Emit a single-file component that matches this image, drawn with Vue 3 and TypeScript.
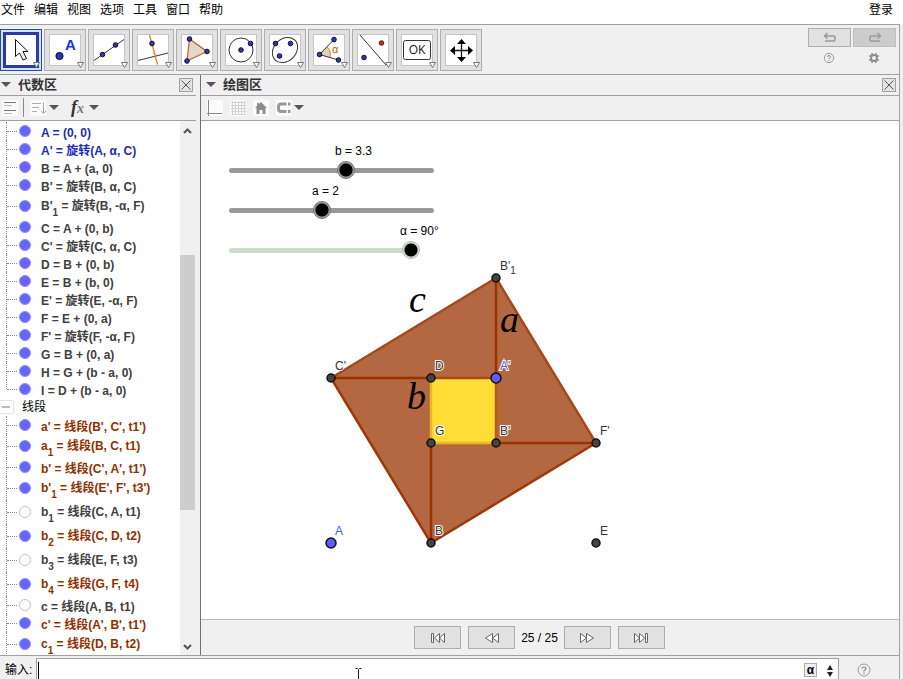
<script setup lang="ts">
import { computed, ref } from 'vue'

interface Row {
  name: string
  sub?: string
  def: string
  tone: 'blue' | 'dark' | 'brown'
  shown: boolean
}

type Pt = [number, number]

const menus: string[] = ['文件', '编辑', '视图', '选项', '工具', '窗口', '帮助']
const tools: string[] = ['移动', '描点', '直线', '垂线', '多边形', '圆', '椭圆', '角度', '轴对称', '按钮', '移动视图']

const row = (name: string, sub: string, def: string, tone: Row['tone'] = 'dark', shown = true): Row => ({ name, sub, def, tone, shown })

const points: Row[] = [
  row('A', '', '(0, 0)', 'blue'),
  row("A'", '', '旋转(A, α, C)', 'blue'),
  row('B', '', 'A + (a, 0)'),
  row("B'", '', '旋转(B, α, C)'),
  row("B'", '1', '旋转(B, -α, F)'),
  row('C', '', 'A + (0, b)'),
  row("C'", '', '旋转(C, α, C)'),
  row('D', '', 'B + (0, b)'),
  row('E', '', 'B + (b, 0)'),
  row("E'", '', '旋转(E, -α, F)'),
  row('F', '', 'E + (0, a)'),
  row("F'", '', '旋转(F, -α, F)'),
  row('G', '', 'B + (0, a)'),
  row('H', '', 'G + (b - a, 0)'),
  row('I', '', 'D + (b - a, 0)'),
]

const segments: Row[] = [
  row("a'", '', "线段(B', C', t1')", 'brown'),
  row('a', '1', '线段(B, C, t1)', 'brown'),
  row("b'", '', "线段(C', A', t1')", 'brown'),
  row("b'", '1', "线段(E', F', t3')", 'brown'),
  row('b', '1', '线段(C, A, t1)', 'dark', false),
  row('b', '2', '线段(C, D, t2)', 'brown'),
  row('b', '3', '线段(E, F, t3)', 'dark', false),
  row('b', '4', '线段(G, F, t4)', 'brown'),
  row('c', '', '线段(A, B, t1)', 'dark', false),
  row("c'", '', "线段(A', B', t1')", 'brown'),
  row('c', '1', '线段(D, B, t2)', 'brown'),
]

const a = ref(2)
const b = ref(3.3)
const alpha = ref(90)
const command = ref('')

// World coordinates to canvas pixels: 50 pixels per unit.
const at = (x: number, y: number): Pt => [130 + x * 50, 422 - y * 50]

const P = computed(() => {
  const u = Number(a.value)
  const v = Number(b.value)
  return {
    A: at(0, 0), B: at(u, 0), C1: at(0, v), D: at(u, v), G: at(u, u),
    A1: at(v, v), B1: at(v, u), T: at(v, u + v), F1: at(u + v, u), E: at(u + v, 0),
  }
})

const poly = (...pts: Pt[]): string => pts.map((p) => p.join(',')).join(' ')

const edges = computed(() => {
  const p = P.value
  return [
    { pts: [p.C1, p.T], color: '#a5491c' },
    { pts: [p.T, p.F1], color: '#a5491c' },
    { pts: [p.D, p.A1], color: '#ad4b0c' },
    { pts: [p.A1, p.B1], color: '#b85a10' },
    { pts: [p.D, p.G], color: '#edb71f' },
    { pts: [p.G, p.B1], color: '#edb71f' },
    { pts: [p.F1, p.B], color: '#9c380a' },
    { pts: [p.C1, p.B], color: '#9c380a' },
    { pts: [p.C1, p.D], color: '#993300' },
    { pts: [p.A1, p.T], color: '#993300' },
    { pts: [p.B1, p.F1], color: '#993300' },
    { pts: [p.G, p.B], color: '#993300' },
  ]
})

const dots = computed(() => {
  const p = P.value
  return [
    { at: p.T, label: "B'", sub: '1', free: false },
    { at: p.C1, label: "C'", sub: '', free: false },
    { at: p.D, label: 'D', sub: '', free: false },
    { at: p.A1, label: "A'", sub: '', free: true },
    { at: p.G, label: 'G', sub: '', free: false },
    { at: p.B1, label: "B'", sub: '', free: false },
    { at: p.F1, label: "F'", sub: '', free: false },
    { at: p.B, label: 'B', sub: '', free: false },
    { at: p.A, label: 'A', sub: '', free: true },
    { at: p.E, label: 'E', sub: '', free: false },
  ]
})
</script>

<template>
  <div class="app">
    <nav class="menu">
      <button v-for="m in menus" :key="m" type="button">{{ m }}</button>
      <button type="button" class="login">登录</button>
    </nav>

    <div class="body">
      <div class="toolbar">
        <button v-for="(t, i) in tools" :key="t" type="button" class="tool" :class="{ active: i === 0 }" :aria-label="t">
          <svg width="42" height="42" viewBox="0 0 42 42">
            <g v-if="i === 0">
              <path d="M15.5 10.5V27.5L19.5 24L23 31L26.5 29.5L23 22.5H28Z" fill="#fff" stroke="#111" />
            </g>
            <g v-else-if="i === 1">
              <circle cx="15.5" cy="27" r="3.6" class="dot" />
              <text x="21" y="21" class="glyph-a">A</text>
            </g>
            <g v-else-if="i === 2">
              <path d="M6 31.5L36 10.5" class="ln" />
              <circle cx="14.5" cy="25.5" r="2.3" class="dot" />
              <circle cx="27.5" cy="16" r="2.3" class="dot" />
            </g>
            <g v-else-if="i === 3">
              <path d="M6 31.5L36 24" class="ln" />
              <path d="M17.5 6L25.5 35.5" stroke="#d9822b" stroke-width="1.3" />
              <circle cx="20" cy="14.5" r="2.3" class="dot" />
            </g>
            <g v-else-if="i === 4">
              <path d="M13.5 10L31 22.5L11 32Z" fill="#e0d6ca" stroke="#b5622f" stroke-width="1.2" />
              <circle cx="13.5" cy="10" r="2.3" class="dot" />
              <circle cx="31" cy="22.5" r="2.3" class="dot" />
              <circle cx="11" cy="32" r="2.3" class="dot" />
            </g>
            <g v-else-if="i === 5">
              <circle cx="21" cy="21" r="12" fill="none" class="ln" />
              <circle cx="21" cy="21" r="2.3" class="dot" />
              <circle cx="30.5" cy="14.5" r="2.3" class="dot" />
            </g>
            <g v-else-if="i === 6">
              <ellipse cx="21" cy="21" rx="14" ry="11" transform="rotate(-45 21 21)" fill="none" class="ln" />
              <circle cx="11.5" cy="14.5" r="2.3" class="dot" />
              <circle cx="26.5" cy="14.5" r="2.3" class="dot" />
              <circle cx="15.5" cy="27" r="2.3" class="dot" />
            </g>
            <g v-else-if="i === 7">
              <path d="M11.5 25.5L19 18A11 11 0 0 1 22 28.5Z" fill="#e0d0c0" />
              <path d="M19 18A11 11 0 0 1 22 28.5" fill="none" stroke="#d9822b" />
              <path d="M26 10.5L11.5 25.5L30.5 31" fill="none" class="ln" />
              <circle cx="26" cy="10.5" r="2.3" class="dot" />
              <circle cx="11.5" cy="25.5" r="2.3" class="dot" />
              <circle cx="30.5" cy="31" r="2.3" class="dot" />
              <text x="24" y="24" class="glyph-alpha">α</text>
            </g>
            <g v-else-if="i === 8">
              <path d="M8 6L34 36" class="ln" />
              <circle cx="12" cy="28.5" r="2.3" class="dot" />
              <circle cx="29.5" cy="14" r="2.3" fill="#b03a10" stroke="#5a1c05" />
            </g>
            <g v-else-if="i === 9">
              <rect x="7.5" y="11.5" width="27" height="19" rx="2" fill="#fff" stroke="#333" />
              <text x="21" y="25" text-anchor="middle" class="glyph-ok">OK</text>
            </g>
            <g v-else>
              <path d="M21.5 13V30M13 21.5H30" stroke="#111" stroke-width="1.3" />
              <path d="M21.5 10L26 15H17ZM21.5 33L26 28H17ZM10 21.5L15 17V26ZM33 21.5L28 17V26Z" fill="#000" />
            </g>
            <path d="M33.5 33.5H39.5L36.5 38.5Z" fill="#fff" stroke="#777" />
          </svg>
        </button>
        <div class="history">
          <button type="button" class="hist" aria-label="撤销">
            <svg width="18" height="12" viewBox="0 0 18 12"><path d="M4 4H12.5Q14 4 14 5.5V7.5Q14 9 12.500 9H4" /><path d="M6.500 1L3.500 4L6.500 6.500" /></svg>
          </button>
          <button type="button" class="hist off" aria-label="重做">
            <svg width="18" height="12" viewBox="0 0 18 12"><path d="M14 4H5.500Q4 4 4 5.500V7.500Q4 9 5.500 9H14" /><path d="M11.500 1L14.500 4L11.500 6.500" /></svg>
          </button>
          <button type="button" class="plain" aria-label="帮助">
            <svg width="12" height="12" viewBox="0 0 12 12"><circle cx="6" cy="6" r="4.7" fill="none" stroke="#999" /><path d="M4.500 5Q4.500 3.500 6 3.500Q7.500 3.500 7.500 4.800Q7.500 5.500 6 6.500V7.200M6 8V9" fill="none" stroke="#888" /></svg>
          </button>
          <button type="button" class="plain" aria-label="设置">
            <svg width="12" height="12" viewBox="0 0 12 12"><circle cx="6" cy="6" r="3" fill="none" stroke="#8c8c8c" stroke-width="1.800" /><path d="M4 1V3M8 1V3M4 9V11M8 9V11M1 4H3M1 8H3M9 4H11M9 8H11" stroke="#8c8c8c" stroke-width="1.500" /></svg>
          </button>
        </div>
      </div>

      <div class="panels">
        <section class="algebra">
          <header class="head">
            <i class="tri"></i><h2>代数区</h2>
            <button type="button" class="close" aria-label="关闭"><svg width="14" height="14" viewBox="0 0 14 14"><path d="M2.500 2.500L11.500 11.500M11.500 2.500L2.500 11.500" /></svg></button>
          </header>
          <div class="style-bar">
            <svg width="21" height="16" viewBox="0 0 21 16"><path d="M0 0H16V16H0Z" fill="#fafafa" /><path d="M2 2.500H14M2 10.500H14" stroke="#777" /><path d="M2 5.500H10M2 13.500H10" stroke="#bbb" /></svg>
            <i class="sep"></i>
            <svg class="sort" width="16" height="16" viewBox="0 0 16 16"><path d="M0 0H16V16H0Z" fill="#fafafa" /><path d="M2 3.500H11M2 7.500H9M2 11.500H7M13.500 2V13M11 11L13.500 13.500L16 11" fill="none" stroke="#aaa" /></svg>
            <i class="tri"></i>
            <span class="fx">f<small>x</small></span>
            <i class="tri"></i>
          </div>
          <div class="list">
            <div class="tree">
              <ul>
                <li v-for="(r, i) in points" :key="i" :class="[r.tone, { tall: r.sub, last: i === points.length - 1 }]">
                  <i class="mark" :class="{ hidden: !r.shown }"></i>
                  <span>{{ r.name }}<sub v-if="r.sub">{{ r.sub }}</sub> = {{ r.def }}</span>
                </li>
              </ul>
              <div class="group"><button type="button" aria-label="折叠"></button><span>线段</span></div>
              <ul>
                <li v-for="(r, i) in segments" :key="i" :class="[r.tone, { tall: r.sub }]">
                  <i class="mark" :class="{ hidden: !r.shown }"></i>
                  <span>{{ r.name }}<sub v-if="r.sub">{{ r.sub }}</sub> = {{ r.def }}</span>
                </li>
              </ul>
            </div>
            <div class="scroll">
              <svg width="15" height="18" viewBox="0 0 15 18"><path d="M4 12L7.500 8.500L11 12" /></svg>
              <i class="before"></i>
              <i class="thumb"></i>
              <i class="after"></i>
              <svg width="15" height="18" viewBox="0 0 15 18"><path d="M4 8L7.500 11.500L11 8" /></svg>
            </div>
          </div>
        </section>

        <section class="graphics">
          <header class="head">
            <i class="tri"></i><h2>绘图区</h2>
            <button type="button" class="close" aria-label="关闭"><svg width="14" height="14" viewBox="0 0 14 14"><path d="M2.500 2.500L11.500 11.500M11.500 2.500L2.500 11.500" /></svg></button>
          </header>
          <div class="style-bar views">
            <svg width="16" height="16" viewBox="0 0 16 16"><path d="M0 0H16V16H0Z" fill="#fcfcfc" /><path d="M1.500 0V16M0 13.500H15" stroke="#888" /></svg>
            <svg width="16" height="16" viewBox="0 0 16 16"><path d="M0 0H16V16H0Z" fill="#fcfcfc" /><path d="M2.500 1V15M5.500 1V15M8.500 1V15M11.500 1V15M14.500 1V15M1 2.500H16M1 5.500H16M1 8.500H16M1 11.500H16M1 14.500H16" stroke="#d2d2d2" /></svg>
            <svg width="16" height="16" viewBox="0 0 16 16"><path d="M0 0H16V16H0Z" fill="#fcfcfc" /><path d="M8 2L14 8H12.500V14H9.500V10H6.500V14H3.500V8H2L4 6V3H6V4Z" fill="#8c8c8c" /></svg>
            <svg width="16" height="16" viewBox="0 0 16 16"><path d="M0 0H16V16H0Z" fill="#fcfcfc" /><path d="M10.500 4H5Q2.500 4 2.500 6.500V9Q2.500 11.500 5 11.500H10.500" fill="none" stroke="#999" stroke-width="3" /><path d="M12 4H14.500M12 11.500H14.500" stroke="#999" stroke-width="3" /></svg>
            <i class="tri"></i>
          </div>
          <div class="canvas">
            <svg class="drawing" width="100%" height="100%">
              <polygon :points="poly(P.C1, P.T, P.F1, P.B)" fill="#b36841" />
              <polygon :points="poly(P.D, P.A1, P.B1, P.G)" fill="#ffdc36" />
              <line v-for="(e, i) in edges" :key="i" :x1="e.pts[0][0]" :y1="e.pts[0][1]" :x2="e.pts[1][0]" :y2="e.pts[1][1]" :stroke="e.color" stroke-width="2.500" />
              <g class="math">
                <text x="208" y="191">c</text>
                <text x="299" y="211">a</text>
                <text x="206" y="288">b</text>
              </g>
              <g v-for="(d, i) in dots" :key="i" :class="{ free: d.free }">
                <circle :cx="d.at[0]" :cy="d.at[1]" :r="d.free ? 5 : 4" class="pt" />
                <text :x="d.at[0] + 4" :y="d.at[1] - 8" class="tag">{{ d.label }}<tspan v-if="d.sub" dy="4" font-size="10">{{ d.sub }}</tspan></text>
              </g>
            </svg>
            <div class="slider sb">
              <label for="sl-b">b = {{ b }}</label>
              <input id="sl-b" v-model.number="b" type="range" min="-3" max="8" step="0.1" />
            </div>
            <div class="slider sa">
              <label for="sl-a">a = {{ a }}</label>
              <input id="sl-a" v-model.number="a" type="range" min="-3" max="8" step="0.1" />
            </div>
            <div class="slider sg">
              <label for="sl-g">α = {{ alpha }}°</label>
              <input id="sl-g" v-model.number="alpha" type="range" min="0" max="90" />
            </div>
          </div>
          <div class="player">
            <button type="button" aria-label="第一步"><svg width="16" height="12" viewBox="0 0 16 12"><path d="M1.500 1.500H3.500V10.500H1.500ZM9.500 1.500V10.500L4.500 6ZM14.500 1.500V10.500L9.500 6Z" /></svg></button>
            <button type="button" aria-label="上一步"><svg width="16" height="12" viewBox="0 0 16 12"><path d="M8.500 1.500V10.500L1.500 6ZM14.500 1.500V10.500L8.500 6Z" /></svg></button>
            <span>25 / 25</span>
            <button type="button" aria-label="下一步"><svg width="16" height="12" viewBox="0 0 16 12"><path d="M1.500 1.500V10.500L7.500 6ZM7.500 1.500V10.500L14.500 6Z" /></svg></button>
            <button type="button" aria-label="最后一步"><svg width="16" height="12" viewBox="0 0 16 12"><path d="M1.500 1.500V10.500L6.500 6ZM6.500 1.500V10.500L11.500 6ZM12.500 1.500H14.500V10.500H12.500Z" /></svg></button>
          </div>
        </section>
      </div>

      <div class="entry">
        <label for="cmd">输入:</label>
        <div class="box">
          <i class="caret"></i>
          <input id="cmd" v-model="command" type="text" />
          <button type="button" class="sym">α</button>
          <svg width="8" height="14" viewBox="0 0 8 14"><path d="M4 1L7 6H1ZM4 13L7 8H1Z" fill="#222" /></svg>
          <svg class="ibeam" width="7" height="14" viewBox="0 0 7 14"><path d="M.5 1.500H2.500L3.500 2.500L4.500 1.500H6.500M3.500 2.500V14" fill="none" stroke="#222" /></svg>
        </div>
        <button type="button" class="ask" aria-label="输入帮助">
          <svg width="14" height="14" viewBox="0 0 14 14"><circle cx="7" cy="7" r="6" fill="none" stroke="#999" /><path d="M5 5.500Q5 4 7 4Q9 4 9 5.500Q9 6.500 7 7.500V8.500M7 9.500V11" fill="none" stroke="#888" stroke-width="1.200" /></svg>
        </button>
      </div>
    </div>
  </div>
</template>

<style>
body {
  background: #fff;
  overflow: hidden;
}
</style>

<style scoped>
.app {
  height: 100vh;
  display: flex;
  flex-direction: column;
  overflow: hidden;
  background: #f0f0f0;
  color: #000;
  font: 12px/18px "Liberation Sans", "Noto Sans CJK SC", sans-serif;
}
.app * {
  box-sizing: border-box;
}
button {
  margin: 0;
  padding: 0;
  border: 0;
  background: none;
  color: inherit;
  font: inherit;
}
svg {
  display: block;
  flex: none;
}
.menu {
  display: flex;
  gap: 9px;
  height: 24px;
  padding: 0 10px 4px 1px;
  align-items: center;
  background: #fff;
}
.login {
  margin-left: auto;
}
.body {
  flex: 1;
  min-height: 0;
  display: flex;
  flex-direction: column;
  margin-right: 3px;
  border-top: 1px solid #a0a0a0;
  border-right: 1px solid #a0a0a0;
}
.toolbar {
  display: flex;
  gap: 2px;
  height: 50px;
  padding: 4px 3px 0 0;
  border-bottom: 1px solid #a0a0a0;
}
.tool {
  width: 42px;
  height: 42px;
  flex: none;
  border: 1px solid #adadad;
  background: linear-gradient(#fff, #fff) center / 30px 30px no-repeat, linear-gradient(#c4c4c4, #c4c4c4) center / 32px 32px no-repeat, #e1e1e1;
}
.tool svg {
  margin: -1px;
}
.tool.active {
  border-color: #2a4a9e;
  background: linear-gradient(#fff, #fff) center / 30px 30px no-repeat, linear-gradient(#2d3aa6, #2d3aa6) center / 36px 36px no-repeat, #cfe4f7;
}
.dot {
  fill: #2a35c8;
  stroke: #111;
}
.ln {
  stroke: #333;
}
.glyph-a {
  font: bold 15px "Liberation Sans", sans-serif;
  fill: #2335d0;
}
.glyph-alpha {
  font: 11px "Liberation Sans", sans-serif;
  fill: #c8600a;
}
.glyph-ok {
  font: 500 12px "Open Sans", sans-serif;
  fill: #111;
}
.history {
  margin-left: auto;
  display: grid;
  grid-template-columns: 43px 43px;
  grid-template-rows: 19px 20px;
  gap: 1px 2px;
  margin-top: -1px;
}
.hist,
.plain {
  display: flex;
  align-items: center;
  justify-content: center;
}
.plain {
  padding-right: 2px;
}
.hist {
  border: 1px solid #adadad;
  background: #e1e1e1;
}
.hist.off {
  background: #ccc;
  border-color: #bfbfbf;
}
.hist path {
  fill: none;
  stroke: #999;
  stroke-width: 1.5;
}
.panels {
  flex: 1;
  min-height: 0;
  display: flex;
}
.algebra {
  width: 200px;
  flex: none;
  display: flex;
  flex-direction: column;
  padding-right: 4px;
}
.graphics {
  flex: 1;
  min-width: 0;
  display: flex;
  flex-direction: column;
  border-left: 1px solid #707070;
}
.head {
  display: flex;
  align-items: center;
  height: 21px;
  flex: none;
  padding: 0 3px 1px 1px;
  border-bottom: 1px solid #a0a0a0;
}
.graphics .head {
  padding-left: 5px;
}
.head h2 {
  margin: 0 0 0 7px;
  color: #333;
  font-size: 13px;
  font-weight: 700;
}
.tri {
  border: 5px solid transparent;
  border-top-color: #555;
  border-bottom: 0;
}
.close {
  margin-left: auto;
  width: 14px;
  height: 14px;
  border: 1px solid #a0a0a0;
  background: #e4e4e4;
}
.close svg {
  margin: -1px;
}
.close path {
  stroke: #555;
}
.style-bar {
  display: flex;
  align-items: center;
  height: 25px;
  flex: none;
  padding: 0 0 1px 2px;
  border-bottom: 1px solid #a0a0a0;
}
.sep {
  width: 1px;
  height: 19px;
  margin-right: 6px;
  background: #888;
}
.sort {
  margin-right: 3px;
}
.fx {
  width: 18px;
  margin: 0 0 0 12px;
  font: italic bold 18px/20px "Liberation Serif", serif;
  color: #333;
}
.fx small {
  font-size: 14px;
  color: #777;
}
.views {
  gap: 7px;
  padding-left: 6px;
}
.views .tri {
  margin-left: -5px;
}
.list {
  flex: 1;
  min-height: 0;
  display: flex;
  overflow: hidden;
  background: #fff;
}
.tree {
  flex: 1;
  min-width: 0;
  padding-top: 1px;
  white-space: nowrap;
}
ul {
  margin: 0;
  padding: 0;
  list-style: none;
}
li {
  position: relative;
  display: flex;
  align-items: center;
  height: 18px;
  padding-left: 19px;
  font-weight: 700;
}
li.tall {
  height: 24px;
}
li::before {
  content: "";
  position: absolute;
  left: 6px;
  top: 0;
  bottom: 0;
  border-left: 1px dotted #888;
}
li.last::before {
  bottom: 50%;
}
li::after {
  content: "";
  position: absolute;
  left: 7px;
  width: 10px;
  top: 50%;
  border-top: 1px dotted #888;
}
li span {
  padding-top: 4px;
}
li.tall span {
  padding: 0;
}
.mark {
  width: 12px;
  height: 12px;
  margin-right: 10px;
  border-radius: 50%;
  border: 1px solid #8f8ffa;
  background: #6666ff;
}
.mark.hidden {
  background: #fff;
  border-color: #c4c4c4;
}
sub {
  font-size: 10px;
  line-height: 0;
  vertical-align: -6px;
}
.blue {
  color: #1e2ab4;
}
.dark {
  color: #404040;
}
.brown {
  color: #8f3000;
}
.group {
  display: flex;
  align-items: center;
  height: 18px;
}
.group button {
  width: 14px;
  height: 14px;
  margin-right: 8px;
  border: 1px solid #e4e4e4;
  border-left: 0;
  border-radius: 0 2px 2px 0;
  background: linear-gradient(#bbb, #bbb) 2px 5px / 8px 2px no-repeat;
}
.scroll {
  width: 16px;
  display: flex;
  flex-direction: column;
  background: #f0f0f0;
}
.scroll path {
  fill: none;
  stroke: #555;
  stroke-width: 2px;
}
.before {
  flex: 116;
}
.thumb {
  flex: 256;
  width: 15px;
  background: #cdcdcd;
}
.after {
  flex: 127;
}
.canvas {
  position: relative;
  flex: 1;
  min-height: 0;
  overflow: hidden;
  background: #fff;
}
.drawing {
  position: absolute;
  inset: 0;
}
.math text {
  font: italic 38px "Liberation Serif", serif;
}
.pt {
  fill: #444;
  stroke: #111;
  stroke-width: 1.5;
}
.tag {
  font-size: 12px;
  fill: #333;
  stroke: #fff;
  stroke-width: 2px;
  paint-order: stroke;
}
.free .pt {
  fill: #5c5cff;
}
.free .tag {
  fill: #4455ee;
}
.slider {
  position: absolute;
  left: 19px;
  width: 223px;
  height: 20px;
}
.sb {
  top: 39px;
}
.sa {
  top: 79px;
}
.sg {
  top: 119px;
  width: 200px;
}
.slider::before {
  content: "";
  position: absolute;
  left: 9px;
  right: 9px;
  top: 8px;
  height: 5px;
  border-radius: 3px;
  background: #999;
}
.sg::before {
  background: #ccdccb;
}
.slider label {
  position: absolute;
  top: -18px;
  white-space: nowrap;
}
.sb label {
  left: 115px;
}
.sa label {
  left: 92px;
}
.sg label {
  left: 180px;
}
.slider input {
  position: relative;
  display: block;
  width: 100%;
  height: 20px;
  margin: 0;
  appearance: none;
  background: none;
}
.slider input::-webkit-slider-thumb {
  appearance: none;
  width: 18px;
  height: 18px;
  border: 1px solid #777;
  border-radius: 50%;
  background: radial-gradient(circle, #000 6px, #999 7px);
}
.sg input::-webkit-slider-thumb {
  border-color: #bbb;
  background: radial-gradient(circle, #000 6px, #ccdccb 7px);
}
.player {
  display: flex;
  align-items: center;
  justify-content: center;
  gap: 7px;
  height: 36px;
  flex: none;
  padding-right: 21px;
  border-top: 1px solid #bbb;
}
.player button {
  display: flex;
  align-items: center;
  justify-content: center;
  width: 47px;
  height: 23px;
  border: 1px solid #adadad;
  background: #e1e1e1;
}
.player path {
  fill: #fff;
  stroke: #666;
}
.player span {
  margin: 0 -1px;
}
.entry {
  display: flex;
  height: 24px;
  flex: none;
  border-top: 1px solid #a0a0a0;
}
.entry label {
  width: 36px;
  padding: 5px 0 0 5px;
}
.box {
  position: relative;
  flex: 1;
  display: flex;
  align-items: center;
  height: 24px;
  margin: 2px 0 0;
  padding: 0 4px 0 1px;
  border: 1px solid #a0a0a0;
  border-bottom: 0;
  background: #fff;
}
.caret {
  width: 1px;
  height: 18px;
  background: #000;
}
.box input {
  flex: 1;
  min-width: 0;
  height: 18px;
  padding: 0 3px;
  border: 0;
  outline: 0;
  background: none;
  font: inherit;
}
.sym {
  width: 13px;
  height: 14px;
  margin: 0 9px 2px 0;
  border: 1px solid #aaa;
  background: #eee;
  font-weight: 700;
  line-height: 12px;
}
.ibeam {
  position: absolute;
  left: 318px;
  top: 8px;
}
.ask {
  width: 60px;
  padding: 5px 0 0 18px;
}
</style>
